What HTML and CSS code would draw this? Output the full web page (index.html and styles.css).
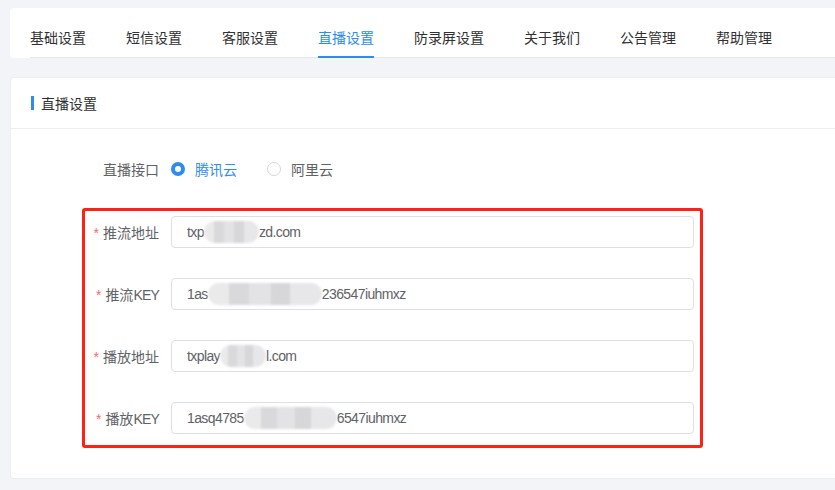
FILE: index.html
```html
<!DOCTYPE html>
<html lang="zh-CN">
<head>
<meta charset="utf-8">
<title>直播设置</title>
<link rel="stylesheet" href="styles.css">
</head>
<body>
<div class="page">
  <div class="card tabs-card">
    <nav class="tabs">
      <span class="tab">基础设置</span>
      <span class="tab">短信设置</span>
      <span class="tab">客服设置</span>
      <span class="tab active">直播设置</span>
      <span class="tab">防录屏设置</span>
      <span class="tab">关于我们</span>
      <span class="tab">公告管理</span>
      <span class="tab">帮助管理</span>
    </nav>
  </div>

  <div class="card panel">
    <div class="panel-head"><span class="bar"></span>直播设置</div>
    <div class="panel-body">
      <div class="row radio-row">
        <label class="label wide">直播接口</label>
        <div class="radios">
          <span class="radio checked"><i class="dot"></i>腾讯云</span>
          <span class="radio"><i class="dot"></i>阿里云</span>
        </div>
      </div>

      <div class="redbox">
        <div class="row">
          <label class="label"><em>*</em>推流地址</label>
          <div class="input">txp<span class="blur w55"></span>zd.com</div>
        </div>
        <div class="row">
          <label class="label"><em>*</em>推流<span class="key">KEY</span></label>
          <div class="input">1as<span class="blur w114"></span>236547iuhmxz</div>
        </div>
        <div class="row">
          <label class="label"><em>*</em>播放地址</label>
          <div class="input">txplay<span class="blur w46"></span>l.com</div>
        </div>
        <div class="row">
          <label class="label"><em>*</em>播放<span class="key">KEY</span></label>
          <div class="input">1asq4785<span class="blur w93"></span>6547iuhmxz</div>
        </div>
      </div>
    </div>
  </div>
</div>
</body>
</html>
```

FILE: styles.css
```css
* { box-sizing: border-box; }
html, body {
  margin: 0;
  padding: 0;
  background: #f2f4f7;
  overflow: hidden;
  font-family: "Liberation Sans", "Noto Sans CJK SC", sans-serif;
  font-size: 14px;
}
.page {
  padding: 8px 0 0 10px;
  height: 490px;
}
.card {
  background: #fff;
  border-radius: 4px 0 0 4px;
}
.tabs-card {
  padding: 9px 0 0 20px;
}
.tabs {
  display: flex;
  gap: 40px;
  border-bottom: 1px solid #e4e7ed;
}
.tab {
  height: 41px;
  padding-top: 3px;
  line-height: 36px;
  color: #303133;
  border-bottom: 2px solid transparent;
  margin-bottom: -1px;
  white-space: nowrap;
}
.tab.active {
  color: #2d8cf0;
  border-bottom-color: #2d8cf0;
}
.panel {
  margin-top: 19px;
  border: 1px solid #ebeef5;
  border-right: none;
  height: 402px;
}
.panel-head {
  height: 51px;
  border-bottom: 1px solid #ebeef5;
  padding-left: 20px;
  display: flex;
  align-items: center;
  color: #303133;
}
.bar {
  width: 3px;
  height: 14px;
  background: #2d8cf0;
  margin-right: 7px;
}
.panel-body {
  padding-top: 24px;
}
.row {
  display: flex;
  align-items: center;
  height: 32px;
}
.label {
  flex: none;
  width: 86px;
  padding-right: 12px;
  text-align: right;
  color: #606266;
  white-space: nowrap;
}
.label.wide { width: 160px; }
.label em {
  font-style: normal;
  color: #f56c6c;
  margin-right: 4px;
}
.key { letter-spacing: -0.8px; }
.radios {
  display: flex;
  gap: 30px;
}
.radio {
  display: flex;
  align-items: center;
  color: #606266;
}
.radio .dot {
  width: 14px;
  height: 14px;
  border-radius: 50%;
  border: 1px solid #d4d7de;
  margin-right: 10px;
  background: #fff;
}
.radio.checked { color: #2d8cf0; }
.radio.checked .dot {
  border: 4.5px solid #2d8cf0;
}
.redbox {
  margin: 23px 0 0 71px;
  width: 621px;
  border: 3px solid #ff2116;
  border-radius: 3px;
  padding: 5px 6px 11px 0;
  display: flex;
  flex-direction: column;
  gap: 30px;
}
.input {
  width: 523px;
  height: 32px;
  border: 1px solid #dcdfe6;
  border-radius: 4px;
  padding: 0 15px;
  display: flex;
  align-items: center;
  color: #606266;
  letter-spacing: -0.6px;
  white-space: nowrap;
}
.blur {
  display: inline-block;
  height: 22px;
  border-radius: 11px;
  background:
    linear-gradient(90deg, #e9e9ea 0 18%, #d8d8da 18% 36%, #e2e2e4 36% 55%, #d5d5d7 55% 72%, #e6e6e8 72% 100%);
  filter: blur(1px);
  opacity: .95;
}
.w55 { width: 55px; }
.w114 { width: 114px; }
.w46 { width: 46px; }
.w93 { width: 93px; }
```
